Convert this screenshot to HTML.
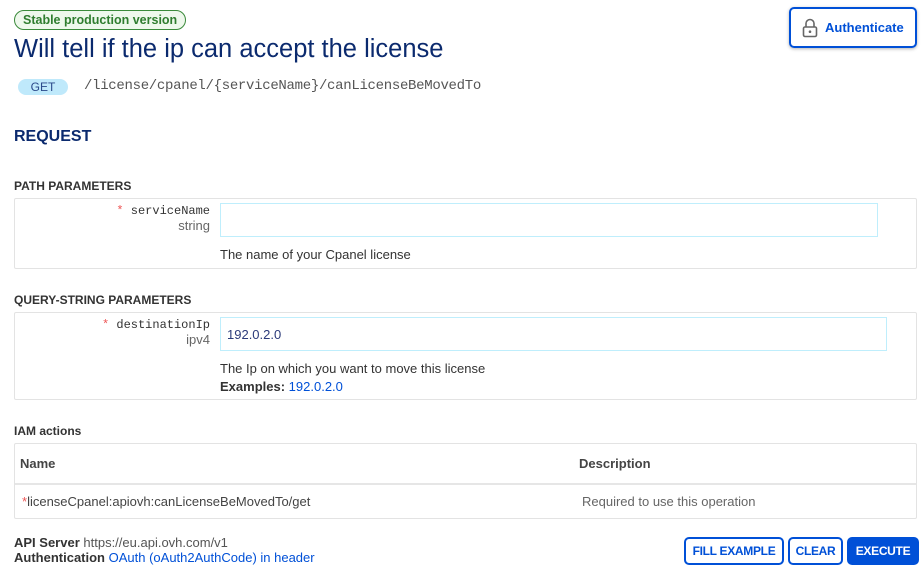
<!DOCTYPE html>
<html><head><style>
body{margin:0;width:922px;height:574px;background:#fff;font-family:"Liberation Sans",sans-serif;color:#333;position:relative;overflow:hidden}
.abs{position:absolute}
.badge{left:14px;top:10px;border:1px solid #3a8a3a;background:#eef8ec;color:#2f7d2f;border-radius:10px;font-size:12.5px;font-weight:bold;padding:1px 8px;height:16px;line-height:16px}
h1{position:absolute;left:14px;top:35px;margin:0;font-size:25.5px;font-weight:normal;color:#0b2a6e}
.get{left:18px;top:79px;width:50px;height:16px;background:#bfe9fb;border-radius:8px;color:#2b4a8a;font-size:12px;text-align:center;line-height:16px}
.path{left:84px;top:78px;font-family:"Liberation Mono",monospace;font-size:14px;letter-spacing:-0.3px;color:#555}
.auth{left:789px;top:7px;width:124px;height:37px;border:2px solid #0050d7;border-radius:5px;box-shadow:0 1px 3px rgba(0,0,0,.3);color:#0050d7;font-weight:bold;font-size:13px;line-height:37px}
.req{left:14px;top:128px;font-size:16px;font-weight:bold;color:#0b2a6e}
.sec{font-size:12px;font-weight:bold;color:#333}
.box{border:1px solid #e3e3e3;border-radius:2px}
.name{font-family:"Liberation Mono",monospace;font-size:12px;text-align:right;color:#333}
.star{color:#e55}
.inp{border:1px solid #bfeefc;background:#fff}
.desc{font-size:13px;color:#333}
a{color:#0050d7;text-decoration:none}
.btn{border:2px solid #0050d7;border-radius:5px;color:#0050d7;font-weight:bold;font-size:12px;letter-spacing:-0.3px;text-align:center;line-height:24px;height:24px;white-space:nowrap}
</style></head><body>
<div class="abs badge">Stable production version</div>
<h1>Will tell if the ip can accept the license</h1>
<div class="abs get">GET</div>
<div class="abs path">/license/cpanel/{serviceName}/canLicenseBeMovedTo</div>
<div class="abs auth"><svg class="abs" style="left:11px;top:9px" width="16" height="20" viewBox="0 0 16 20"><path d="M4 9V5.5a4 4 0 0 1 8 0V9" fill="none" stroke="#666" stroke-width="1.6"/><rect x="1.5" y="9" width="13" height="9.5" rx="1.5" fill="none" stroke="#666" stroke-width="1.6"/><circle cx="8" cy="13.7" r="1.3" fill="#666"/></svg><span class="abs" style="left:34px;top:0">Authenticate</span></div>
<div class="abs req">REQUEST</div>

<div class="abs sec" style="left:14px;top:179px">PATH PARAMETERS</div>
<div class="abs box" style="left:14px;top:198px;width:901px;height:69px"></div>
<div class="abs name" style="left:60px;top:204px;width:150px"><span class="star">*</span> serviceName</div>
<div class="abs desc" style="left:150px;top:218px;width:60px;text-align:right;color:#666">string</div>
<div class="abs inp" style="left:220px;top:203px;width:656px;height:32px"></div>
<div class="abs desc" style="left:220px;top:247px">The name of your Cpanel license</div>

<div class="abs sec" style="left:14px;top:293px">QUERY-STRING PARAMETERS</div>
<div class="abs box" style="left:14px;top:312px;width:901px;height:86px"></div>
<div class="abs name" style="left:40px;top:318px;width:170px"><span class="star">*</span> destinationIp</div>
<div class="abs desc" style="left:150px;top:332px;width:60px;text-align:right;color:#666">ipv4</div>
<div class="abs inp" style="left:220px;top:317px;width:665px;height:32px"></div>
<div class="abs desc" style="left:227px;top:327px;color:#2b3a7a">192.0.2.0</div>
<div class="abs desc" style="left:220px;top:361px">The Ip on which you want to move this license</div>
<div class="abs desc" style="left:220px;top:379px"><b>Examples:</b> <a>192.0.2.0</a></div>

<div class="abs sec" style="left:14px;top:424px">IAM actions</div>
<div class="abs box" style="left:14px;top:443px;width:901px;height:74px"></div>
<div class="abs" style="left:15px;top:483px;width:901px;height:2px;background:#e6e6e6"></div>
<div class="abs desc" style="left:20px;top:456px;font-weight:bold;color:#444">Name</div>
<div class="abs desc" style="left:579px;top:456px;font-weight:bold;color:#444">Description</div>
<div class="abs desc" style="left:22px;top:494px;color:#444"><span class="star">*</span>licenseCpanel:apiovh:canLicenseBeMovedTo/get</div>
<div class="abs desc" style="left:582px;top:494px;color:#666">Required to use this operation</div>

<div class="abs desc" style="left:14px;top:535px"><b>API Server</b> <span style="color:#555">https://eu.api.ovh.com/v1</span></div>
<div class="abs desc" style="left:14px;top:550px"><b>Authentication</b> <a>OAuth (oAuth2AuthCode) in header</a></div>
<div class="abs btn" style="left:684px;top:537px;width:96px">FILL EXAMPLE</div>
<div class="abs btn" style="left:788px;top:537px;width:51px">CLEAR</div>
<div class="abs btn" style="left:847px;top:537px;width:68px;background:#0050d7;color:#fff">EXECUTE</div>
</body></html>
